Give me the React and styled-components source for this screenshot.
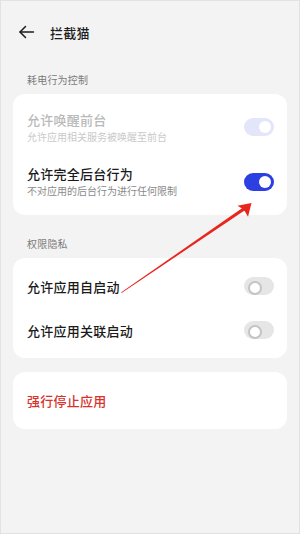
import React from 'react'
import styled, { createGlobalStyle } from 'styled-components'

const GlobalStyle = createGlobalStyle`
  html, body {
    margin: 0;
    padding: 0;
    background: #f3f3f3;
  }
  * { box-sizing: border-box; }
`

const Page = styled.div`
  position: relative;
  width: 300px;
  height: 534px;
  background: #f3f3f3;
  border: 1px solid #e2e2e2;
  font-family: "Noto Sans CJK SC", "Noto Sans", sans-serif;
  overflow: hidden;
`

const Header = styled.div`
  display: flex;
  align-items: center;
  height: 30px;
  margin-top: 16px;
  padding-left: 17px;
  color: #1c1c1c;

  h1 {
    margin: 0 0 0 15px;
    font-size: 13px;
    font-weight: 500;
    letter-spacing: 0.3px;
  }
`

const Content = styled.div`
  padding: 0 12px;
`

const SectionLabel = styled.div`
  height: 14px;
  line-height: 14px;
  margin: ${({ top }) => top}px 0 7px 14px;
  font-size: 10px;
  color: #7a7a7a;
  letter-spacing: 0.2px;
`

const Card = styled.div`
  background: #fff;
  border-radius: 12px;
  padding: 6px 13px 6px 14px;
  margin-bottom: ${({ bottom }) => bottom || 0}px;
`

const Row = styled.div`
  display: flex;
  align-items: center;
  justify-content: space-between;
  height: ${({ h }) => h}px;
`

const Texts = styled.div`
  display: flex;
  flex-direction: column;
  gap: 2px;
`

const Title = styled.div`
  font-size: 13px;
  line-height: 17px;
  font-weight: 500;
  letter-spacing: 0.25px;
  color: ${({ disabled, danger }) => (danger ? '#d8322d' : disabled ? '#b9b9b9' : '#1a1a1a')};
`

const Sub = styled.div`
  font-size: 10px;
  line-height: 14px;
  color: ${({ disabled }) => (disabled ? '#c9c9c9' : '#8a8a8a')};
`

const Toggle = styled.div`
  position: relative;
  width: 30px;
  height: 18px;
  border-radius: 9px;
  flex-shrink: 0;
  background: ${({ on, disabled }) => (on ? (disabled ? '#e3e5fa' : '#2c3fe0') : '#e6e6e6')};

  &::after {
    content: '';
    position: absolute;
    top: ${({ on }) => (on ? 3 : 4)}px;
    left: ${({ on }) => (on ? 15 : 4)}px;
    width: ${({ on }) => (on ? 12 : 10)}px;
    height: ${({ on }) => (on ? 12 : 10)}px;
    border-radius: 50%;
    background: #fff;
    border: ${({ on }) => (on ? 'none' : '2px solid #c4c4c4')};
  }
`

const ArrowOverlay = styled.svg`
  position: absolute;
  left: 0;
  top: 0;
  pointer-events: none;
`

const BackIcon = () => (
  <svg width="17" height="14" viewBox="0 0 17 14" fill="none" stroke="#1c1c1c" strokeWidth="1.5" strokeLinecap="round" strokeLinejoin="round">
    <path d="M15.5 7H2" />
    <path d="M7.5 1.5L2 7l5.5 5.5" />
  </svg>
)

const RedArrow = () => (
  <ArrowOverlay width="300" height="534" viewBox="0 0 300 534">
    <polygon points="120,291.5 120.6,292 244.6,208.8 242.8,206" fill="#e8261e" />
    <polygon points="250.5,202 236.5,204.8 241,207.5 244,210.5 247,215.8" fill="#e8261e" />
  </ArrowOverlay>
)

export default function App() {
  return (
    <Page>
      <GlobalStyle />
      <Header>
        <BackIcon />
        <h1>拦截猫</h1>
      </Header>

      <Content>
        <SectionLabel top={26}>耗电行为控制</SectionLabel>
        <Card>
          <Row h={54.5}>
            <Texts>
              <Title disabled>允许唤醒前台</Title>
              <Sub disabled>允许应用相关服务被唤醒至前台</Sub>
            </Texts>
            <Toggle on disabled />
          </Row>
          <Row h={54.5}>
            <Texts>
              <Title>允许完全后台行为</Title>
              <Sub>不对应用的后台行为进行任何限制</Sub>
            </Texts>
            <Toggle on />
          </Row>
        </Card>

        <SectionLabel top={22}>权限隐私</SectionLabel>
        <Card bottom={14}>
          <Row h={44}>
            <Title>允许应用自启动</Title>
            <Toggle />
          </Row>
          <Row h={44}>
            <Title>允许应用关联启动</Title>
            <Toggle />
          </Row>
        </Card>

        <Card>
          <Row h={45}>
            <Title danger>强行停止应用</Title>
          </Row>
        </Card>
      </Content>

      <RedArrow />
    </Page>
  )
}
